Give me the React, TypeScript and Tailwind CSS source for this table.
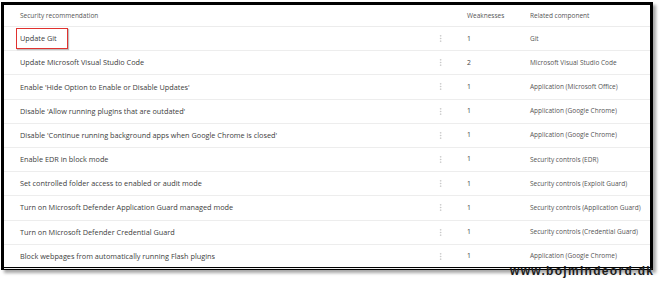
import { EllipsisVertical } from 'lucide-react'

type Rec = { title: string; weak: number; comp: string }

const recs: Rec[] = [
  { title: 'Update Git', weak: 1, comp: 'Git' },
  { title: 'Update Microsoft Visual Studio Code', weak: 2, comp: 'Microsoft Visual Studio Code' },
  { title: "Enable 'Hide Option to Enable or Disable Updates'", weak: 1, comp: 'Application (Microsoft Office)' },
  { title: "Disable 'Allow running plugins that are outdated'", weak: 1, comp: 'Application (Google Chrome)' },
  { title: "Disable 'Continue running background apps when Google Chrome is closed'", weak: 1, comp: 'Application (Google Chrome)' },
  { title: 'Enable EDR in block mode', weak: 1, comp: 'Security controls (EDR)' },
  { title: 'Set controlled folder access to enabled or audit mode', weak: 1, comp: 'Security controls (Exploit Guard)' },
  { title: 'Turn on Microsoft Defender Application Guard managed mode', weak: 1, comp: 'Security controls (Application Guard)' },
  { title: 'Turn on Microsoft Defender Credential Guard', weak: 1, comp: 'Security controls (Credential Guard)' },
  { title: 'Block webpages from automatically running Flash plugins', weak: 1, comp: 'Application (Google Chrome)' },
]

export default function App() {
  return (
    <div className="relative w-[661px] h-[284px] bg-white overflow-hidden" style={{ fontFamily: '"Open Sans", "Noto Sans", sans-serif' }}>
      {/* framed table */}
      <div className="ml-[1px] mt-[2px] w-[652px] h-[268px] border-[3px] border-black bg-white shadow-[3px_3px_3px_rgba(0,0,0,0.35)]">
        {/* header */}
        <div className="grid grid-cols-[427px_36px_63px_1fr] h-[22px] items-center border-b border-[#ececec] text-[6.5px] text-[#555]">
          <div className="pl-[16px]">Security recommendation</div>
          <div />
          <div>Weaknesses</div>
          <div>Related component</div>
        </div>

        {recs.map((r, i) => (
          <div
            key={r.title}
            className="grid grid-cols-[427px_36px_63px_1fr] h-[24.2px] items-center border-b border-[#ededed]"
          >
            <div className="pl-[16px] text-[7.3px] text-[#404040] whitespace-nowrap">
              {i === 0 ? (
                <span className="-ml-[4px] inline-block border-[1.5px] border-[#e0322f] pl-[3px] pr-[10px] py-[4px] shadow-[1px_1px_1px_rgba(0,0,0,0.25)]">
                  {r.title}
                </span>
              ) : (
                r.title
              )}
            </div>
            <div className="flex items-center pl-[5px]">
              <EllipsisVertical size={9} strokeWidth={1.2} className="text-[#b0b0b0]" />
            </div>
            <div className="text-[6.8px] text-[#444]">{r.weak}</div>
            <div className="text-[6.5px] text-[#555] whitespace-nowrap">{r.comp}</div>
          </div>
        ))}
      </div>

      {/* watermark */}
      <div
        className="absolute left-[510px] top-[265px] text-[12px] font-bold tracking-[1.3px] text-[#1c1c1c] leading-none whitespace-nowrap"
        style={{ fontFamily: '"Liberation Sans", sans-serif' }}
      >
        www.bojmindeord.dk
      </div>
    </div>
  )
}
